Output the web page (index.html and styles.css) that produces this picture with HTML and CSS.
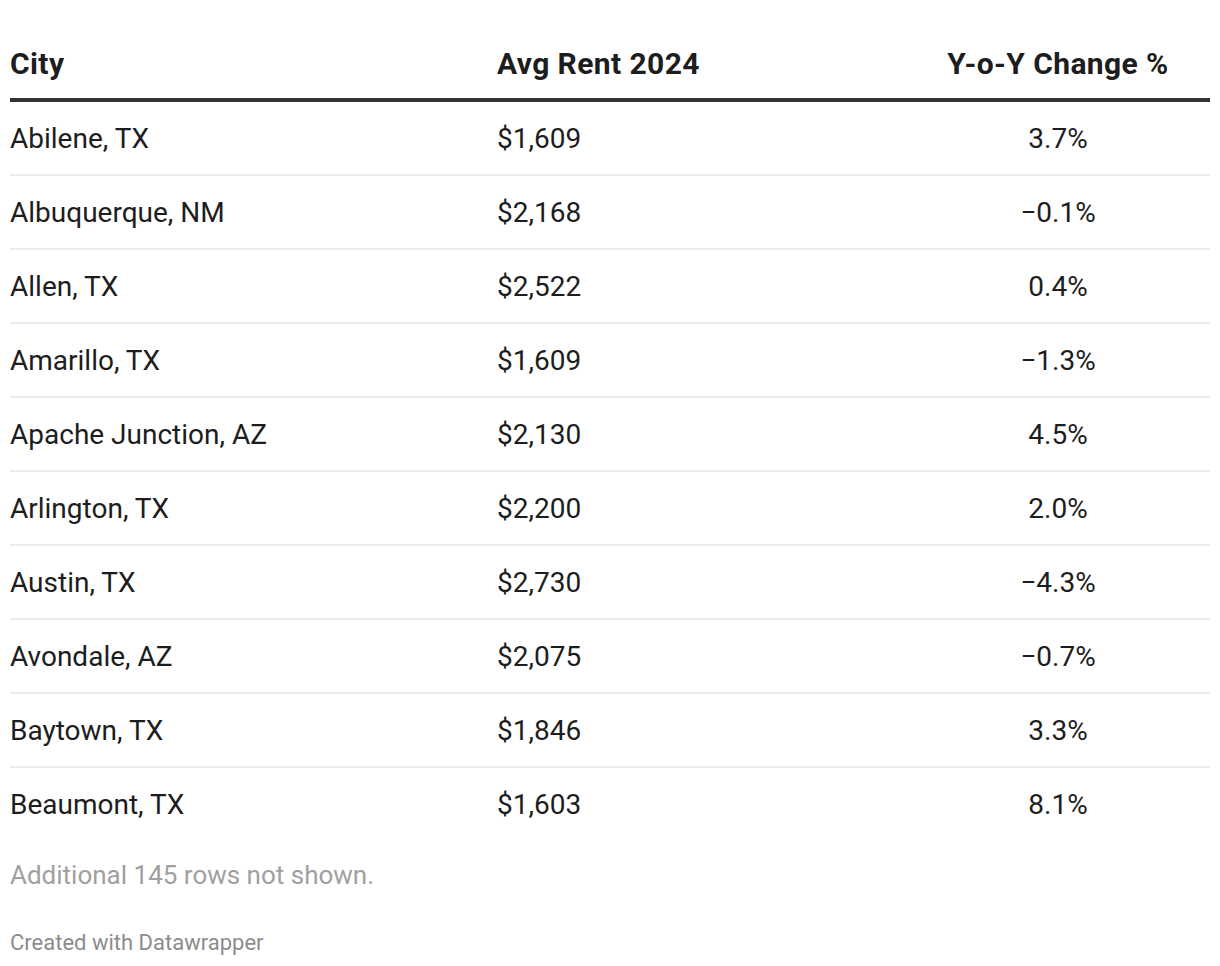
FILE: index.html
```html
<!DOCTYPE html>
<html lang="en">
<head>
<meta charset="utf-8">
<title>Avg Rent 2024</title>
<link rel="stylesheet" href="styles.css">
</head>
<body>
<div class="chart">
  <div class="table">
    <div class="row head">
      <div class="cell c1">City</div>
      <div class="cell c2">Avg Rent 2024</div>
      <div class="cell c3">Y-o-Y Change %</div>
    </div>
    <div class="row"><div class="cell c1">Abilene, TX</div><div class="cell c2">$1,609</div><div class="cell c3">3.7%</div></div>
    <div class="row"><div class="cell c1">Albuquerque, NM</div><div class="cell c2">$2,168</div><div class="cell c3">−0.1%</div></div>
    <div class="row"><div class="cell c1">Allen, TX</div><div class="cell c2">$2,522</div><div class="cell c3">0.4%</div></div>
    <div class="row"><div class="cell c1">Amarillo, TX</div><div class="cell c2">$1,609</div><div class="cell c3">−1.3%</div></div>
    <div class="row"><div class="cell c1">Apache Junction, AZ</div><div class="cell c2">$2,130</div><div class="cell c3">4.5%</div></div>
    <div class="row"><div class="cell c1">Arlington, TX</div><div class="cell c2">$2,200</div><div class="cell c3">2.0%</div></div>
    <div class="row"><div class="cell c1">Austin, TX</div><div class="cell c2">$2,730</div><div class="cell c3">−4.3%</div></div>
    <div class="row"><div class="cell c1">Avondale, AZ</div><div class="cell c2">$2,075</div><div class="cell c3">−0.7%</div></div>
    <div class="row"><div class="cell c1">Baytown, TX</div><div class="cell c2">$1,846</div><div class="cell c3">3.3%</div></div>
    <div class="row last"><div class="cell c1">Beaumont, TX</div><div class="cell c2">$1,603</div><div class="cell c3">8.1%</div></div>
  </div>
  <p class="notes">Additional 145 rows not shown.</p>
  <p class="credit">Created with Datawrapper</p>
</div>
</body>
</html>
```
FILE: styles.css
```css
html, body {
  margin: 0;
  padding: 0;
  background: #ffffff;
}
body {
  font-family: Roboto, "Liberation Sans", Arial, sans-serif;
  color: #1d1d1d;
}
.chart {
  padding: 49px 10px 0;
}
.table {
  display: flex;
  flex-direction: column;
}
.row {
  display: grid;
  grid-template-columns: 487px 409px 304px;
  height: 72px;
  align-items: center;
  border-bottom: 2px solid #ececec;
  font-size: 28px;
}
.row.last {
  border-bottom: none;
}
.row.head {
  height: auto;
  line-height: 30px;
  padding-bottom: 19px;
  font-size: 30px;
  font-weight: 700;
  letter-spacing: 0.4px;
  border-bottom: 4px solid #333333;
}
.cell {
  white-space: nowrap;
}
.c3 {
  text-align: center;
}
.notes {
  margin: 0;
  padding-top: 20px;
  font-size: 26px;
  line-height: 30px;
  color: #a0a0a0;
}
.credit {
  margin: 0;
  padding-top: 40px;
  font-size: 22px;
  line-height: 26px;
  color: #8c8c8c;
}
```
